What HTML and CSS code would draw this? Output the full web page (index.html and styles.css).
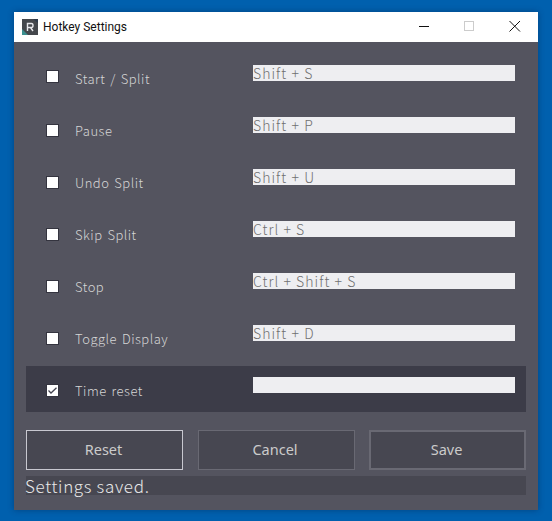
FILE: index.html
```html
<!DOCTYPE html>
<html lang="en">
<head>
<meta charset="utf-8">
<title>Hotkey Settings</title>
<link rel="stylesheet" href="styles.css">
</head>
<body>
<div class="window">
  <header class="titlebar">
    <svg class="app-icon" viewBox="0 0 16 16" aria-hidden="true">
      <rect width="16" height="16" fill="#44474c"/>
      <path d="M0 16V10L6 16Z" fill="#3b8f8f"/>
      <path d="M11 0H16V4Z" fill="#2e3a4a"/>
      <path d="M5.500 12V4.500H9.500Q11 4.500 11 6.500T9.500 8.500H5.500M8.500 8.500L11 12" fill="none" stroke="#e8e8ec" stroke-width="1.400"/>
    </svg>
    <span class="title">Hotkey Settings</span>
    <div class="controls">
      <svg class="ctl" viewBox="0 0 46 30" aria-hidden="true"><path d="M19 14.500H29" stroke="#111" stroke-width="1"/></svg>
      <svg class="ctl" viewBox="0 0 46 30" aria-hidden="true"><rect x="18.500" y="9.500" width="9" height="9" fill="none" stroke="#ccc" stroke-width="1"/></svg>
      <svg class="ctl" viewBox="0 0 46 30" aria-hidden="true"><path d="M17.500 9L28 19.500M28 9L17.500 19.500" stroke="#111" stroke-width="1"/></svg>
    </div>
  </header>
  <main class="content">
    <div class="rows">
      <div class="row"><span class="check raised"></span><span class="label">Start / Split</span><div class="key">Shift + S</div></div>
      <div class="row"><span class="check"></span><span class="label">Pause</span><div class="key">Shift + P</div></div>
      <div class="row"><span class="check"></span><span class="label">Undo Split</span><div class="key">Shift + U</div></div>
      <div class="row"><span class="check"></span><span class="label">Skip Split</span><div class="key">Ctrl + S</div></div>
      <div class="row"><span class="check"></span><span class="label">Stop</span><div class="key">Ctrl + Shift + S</div></div>
      <div class="row"><span class="check"></span><span class="label">Toggle Display</span><div class="key">Shift + D</div></div>
      <div class="row active"><span class="check">
        <svg viewBox="0 0 11 11" aria-hidden="true"><path d="M1.500 5.500L4 8L9.500 2.800" fill="none" stroke="#444450" stroke-width="1.300"/></svg>
      </span><span class="label">Time reset</span><div class="key"></div></div>
    </div>
    <div class="buttons">
      <button class="btn focus">Reset</button>
      <button class="btn">Cancel</button>
      <button class="btn save">Save</button>
    </div>
    <div class="status">Settings saved.</div>
  </main>
</div>
</body>
</html>
```
FILE: styles.css
```css
* { box-sizing: border-box; }
html, body { height: 100%; }
body {
  margin: 0;
  padding: 12px 14px 11px;
  background: #0060ae;
  overflow: hidden;
}
.window {
  width: 524px;
  height: 498px;
  display: flex;
  flex-direction: column;
  box-shadow: 0 0 6px rgba(0, 30, 70, 0.45);
}
.titlebar {
  height: 30px;
  flex: none;
  background: #fff;
  display: flex;
  align-items: center;
  padding-left: 8px;
  color: #111;
}
.app-icon { width: 16px; height: 16px; margin-right: 5px; }
.title { flex: 1; font: 12px Roboto, sans-serif; }
.controls { display: flex; }
.ctl { width: 46px; height: 30px; display: block; }
.content {
  flex: 1;
  background: #54545f;
  padding: 12px 12px 15px;
  display: flex;
  flex-direction: column;
}
.rows { display: flex; flex-direction: column; gap: 6px; }
.row {
  height: 46px;
  display: flex;
  padding-left: 20px;
  color: #d6d6d6;
}
.row.active { background: #3c3c48; }
.check {
  width: 13px;
  height: 13px;
  margin-top: 18px;
  background: #fff;
  border: 1px solid #34343f;
  flex: none;
}
.check.raised { margin-top: 16px; }
.check svg { display: block; width: 11px; height: 11px; }
.label {
  width: 178px;
  margin-left: 16px;
  font: 200 13px/20px "Noto Sans CJK JP", sans-serif;
  letter-spacing: 0.5px;
  word-spacing: 1.5px;
  padding-top: 15px;
  height: 46px;
}
.key {
  width: 262px;
  height: 16px;
  margin-top: 11px;
  background: #eeeef1;
  color: #707070;
  font: 200 14px/16px "Noto Sans CJK JP", sans-serif;
  letter-spacing: 1.05px;
  white-space: nowrap;
}
.buttons {
  display: flex;
  justify-content: space-between;
  margin-top: 18px;
}
.btn {
  width: 157px;
  height: 40px;
  padding: 0 2px 2px 0;
  background: #474751;
  border: 1px solid #696973;
  color: #cbcbcb;
  font: 14.5px "Noto Sans", sans-serif;
}
.btn.focus { border-color: #c8c8d0; }
.btn.save { border-width: 2px; }
.status {
  margin-top: 6px;
  height: 19px;
  background: #474751;
  color: #e8e8e8;
  font: 200 17px/19px "Noto Sans CJK JP", sans-serif;
  letter-spacing: 0.67px;
  text-indent: -1px;
}
```
